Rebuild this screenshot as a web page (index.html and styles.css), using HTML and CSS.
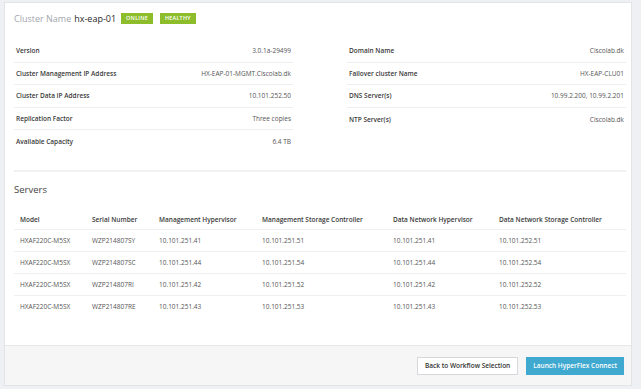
FILE: index.html
```html
<!DOCTYPE html>
<html lang="en">

<head>
    <meta charset="UTF-8">
    <meta name="viewport" content="width=device-width, initial-scale=1.0">
    <title>Cluster Summary</title>
    <link rel="stylesheet" href="styles.css">
</head>

<body>
    <div id="page">
        <div id="card">
            <div id="content">
                <!-- title -->
                <div id="title">
                    <span class="muted">Cluster Name</span>
                    <span class="name">hx-eap-01</span>
                    <span class="badge">ONLINE</span>
                    <span class="badge">HEALTHY</span>
                </div>

                <!-- cluster details -->
                <div id="details">
                    <div class="col">
                        <div class="row"><span class="label">Version</span><span class="value">3.0.1a-29499</span></div>
                        <div class="row"><span class="label">Cluster Management IP Address</span><span class="value">HX-EAP-01-MGMT.Ciscolab.dk</span></div>
                        <div class="row"><span class="label">Cluster Data IP Address</span><span class="value">10.101.252.50</span></div>
                        <div class="row"><span class="label">Replication Factor</span><span class="value">Three copies</span></div>
                        <div class="row"><span class="label">Available Capacity</span><span class="value">6.4 TB</span></div>
                    </div>
                    <div class="col">
                        <div class="row"><span class="label">Domain Name</span><span class="value">Ciscolab.dk</span></div>
                        <div class="row"><span class="label">Failover cluster Name</span><span class="value">HX-EAP-CLU01</span></div>
                        <div class="row"><span class="label">DNS Server(s)</span><span class="value">10.99.2.200, 10.99.2.201</span></div>
                        <div class="row"><span class="label">NTP Server(s)</span><span class="value">Ciscolab.dk</span></div>
                    </div>
                </div>

                <!-- servers -->
                <h2>Servers</h2>
                <table id="servers">
                    <thead>
                        <tr>
                            <th class="c1">Model</th>
                            <th class="c2">Serial Number</th>
                            <th class="c3">Management Hypervisor</th>
                            <th class="c4">Management Storage Controller</th>
                            <th class="c5">Data Network Hypervisor</th>
                            <th>Data Network Storage Controller</th>
                        </tr>
                    </thead>
                    <tbody>
                        <tr>
                            <td>HXAF220C-M5SX</td><td>WZP214807SY</td><td>10.101.251.41</td><td>10.101.251.51</td><td>10.101.251.41</td><td>10.101.252.51</td>
                        </tr>
                        <tr>
                            <td>HXAF220C-M5SX</td><td>WZP214807SC</td><td>10.101.251.44</td><td>10.101.251.54</td><td>10.101.251.44</td><td>10.101.252.54</td>
                        </tr>
                        <tr>
                            <td>HXAF220C-M5SX</td><td>WZP214807RI</td><td>10.101.251.42</td><td>10.101.251.52</td><td>10.101.251.42</td><td>10.101.252.52</td>
                        </tr>
                        <tr>
                            <td>HXAF220C-M5SX</td><td>WZP214807RE</td><td>10.101.251.43</td><td>10.101.251.53</td><td>10.101.251.43</td><td>10.101.252.53</td>
                        </tr>
                    </tbody>
                </table>
            </div>

            <!-- footer -->
            <div id="footer">
                <button class="btn">Back to Workflow Selection</button>
                <button class="btn primary">Launch HyperFlex Connect</button>
            </div>
        </div>
    </div>
</body>

</html>
```
FILE: styles.css
```css
* {
    margin: 0;
    padding: 0;
    box-sizing: border-box;
}

body,
html {
    height: 100%;
    width: 100%;
    font-family: "Open Sans", sans-serif;
    background-color: #eef0f4;
    color: #555;
}

#page {
    padding: 2px 9px 3px 4px;
    height: 100%;
}

#card {
    height: 100%;
    background-color: #fff;
    border: 1px solid #e2e4e8;
    display: flex;
    flex-direction: column;
}

#content {
    flex: 1;
    padding: 7px 5px 0 9px;
}

#title {
    display: flex;
    align-items: center;
    height: 17px;
    font-size: 9px;
}

#title .muted {
    color: #a2a6ad;
    margin-right: 3px;
}

#title .name {
    color: #2a2a2a;
    margin-right: 5px;
}

.badge {
    background-color: #8dbd2b;
    color: #fff;
    font-size: 5.5px;
    font-weight: 600;
    letter-spacing: 0.2px;
    padding: 2px 5px;
    margin-right: 7px;
    line-height: 7px;
}

#details {
    display: flex;
    gap: 54px;
    margin-top: 13px;
    padding-bottom: 17px;
    border-bottom: 2px solid #f0f1f3;
}

.col {
    width: 280px;
}

.row {
    height: 22.6px;
    display: flex;
    align-items: center;
    justify-content: space-between;
    padding: 0 2px;
    font-size: 6.5px;
    border-bottom: 1px solid #eeeff1;
}

.row:last-child {
    border-bottom: none;
}

.label {
    font-weight: 600;
    color: #3a3a3a;
}

.value {
    color: #555;
}

h2 {
    font-size: 9.5px;
    font-weight: normal;
    color: #444;
    margin-top: 11px;
}

#servers {
    width: 100%;
    border-collapse: collapse;
    margin-top: 14px;
    font-size: 6.5px;
}

#servers th {
    text-align: left;
    font-weight: 600;
    color: #3a3a3a;
    height: 20px;
    padding: 0 6px;
    border-bottom: 1px solid #eeeff1;
}

#servers td {
    height: 21.7px;
    padding: 0 6px;
    color: #555;
    border-bottom: 1px solid #eeeff1;
}

#servers tr:last-child td {
    border-bottom: none;
}

.c1 {
    width: 72px;
}

.c2 {
    width: 67px;
}

.c3 {
    width: 103px;
}

.c4 {
    width: 131px;
}

.c5 {
    width: 106px;
}

#footer {
    height: 40px;
    background-color: #f6f6f7;
    border-top: 1px solid #e6e7e9;
    display: flex;
    align-items: center;
    justify-content: flex-end;
    gap: 8px;
    padding: 0 7px 0 0;
}

.btn {
    height: 18px;
    font-family: "Open Sans", sans-serif;
    font-size: 6.5px;
    font-weight: 600;
    padding: 0 7px;
    background-color: #fff;
    color: #333;
    border: 1px solid #d6d8dc;
    cursor: pointer;
}

.btn.primary {
    background-color: #3fa9cf;
    border-color: #3fa9cf;
    color: #fff;
    padding: 0 6px;
}
```
